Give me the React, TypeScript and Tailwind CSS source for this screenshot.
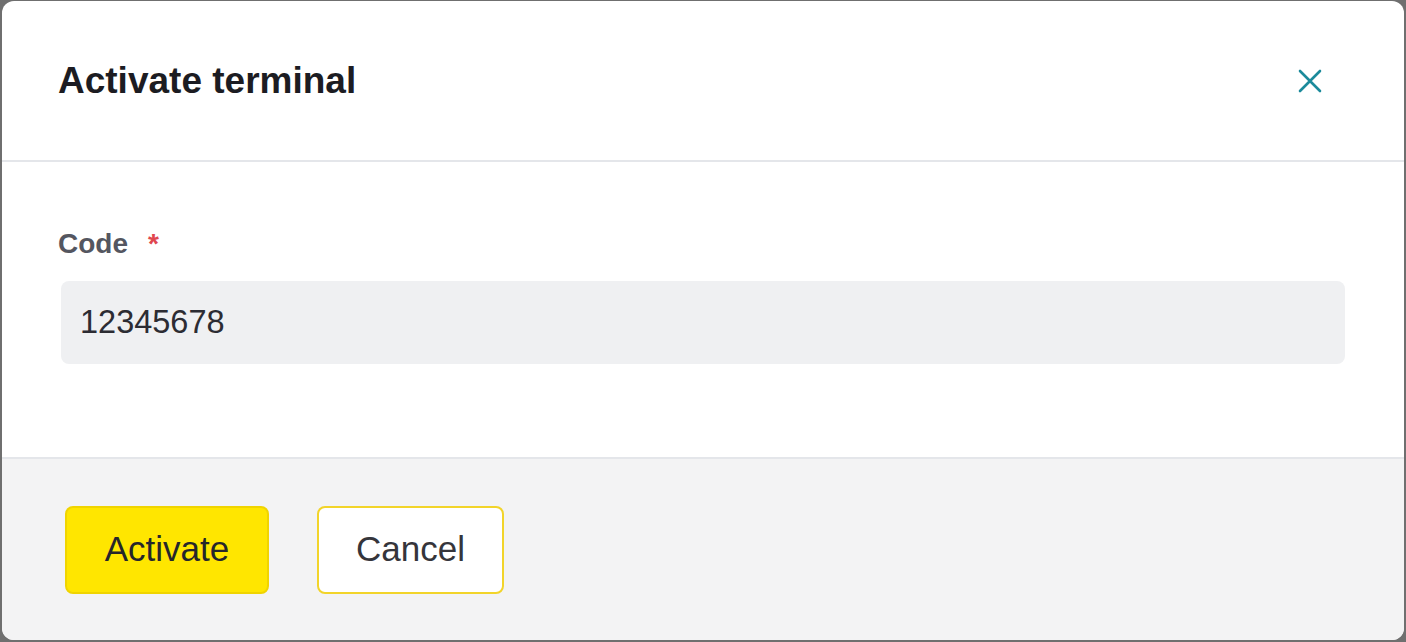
import React from "react";

function CloseIcon() {
  return (
    <svg width="24" height="24" viewBox="0 0 24 24" fill="none" stroke="#1b8a9b" strokeWidth="2.6" strokeLinecap="round">
      <path d="M2 2L22 22M22 2L2 22" />
    </svg>
  );
}

export default function App() {
  return (
    <div className="h-[642px] w-[1406px] bg-[#6f6f6f] pb-[2px] pl-[2px] pr-[2px] pt-[1px] font-['Liberation_Sans',Arial,sans-serif]">
      <div className="flex h-full flex-col overflow-hidden rounded-[12px] bg-white">
        <header className="flex h-[161px] shrink-0 items-center justify-between border-b-2 border-[#e4e6ea] pl-[56px] pr-[82px]">
          <h2 className="text-[37px] font-bold leading-none text-[#1c1c22]">Activate terminal</h2>
          <button type="button" className="flex items-center justify-center">
            <CloseIcon />
          </button>
        </header>

        <div className="h-[295px] shrink-0 px-[59px] pt-[66px]">
          <label className="-ml-[3px] flex h-[32px] items-center text-[28px] font-bold leading-none text-[#545660]">
            Code
            <span className="ml-[20px] text-[#e0474f]">*</span>
          </label>
          <div className="mt-[21px] flex h-[83px] items-center rounded-[8px] bg-[#eff0f2] pl-[19px] text-[32.5px] leading-none text-[#2c2c33]">
            12345678
          </div>
        </div>

        <footer className="flex flex-1 items-center gap-[48px] border-t-2 border-[#e4e6ea] bg-[#f3f3f4] pl-[63px]">
          <button
            type="button"
            className="h-[88px] w-[204px] rounded-[8px] border-2 border-[#f0d400] bg-[#ffe600] pb-[3px] text-[35px] leading-none text-[#26262b]"
          >
            Activate
          </button>
          <button
            type="button"
            className="h-[88px] w-[187px] rounded-[8px] border-2 border-[#f2d42a] bg-white pb-[3px] text-[35px] leading-none text-[#35353b]"
          >
            Cancel
          </button>
        </footer>
      </div>
    </div>
  );
}
